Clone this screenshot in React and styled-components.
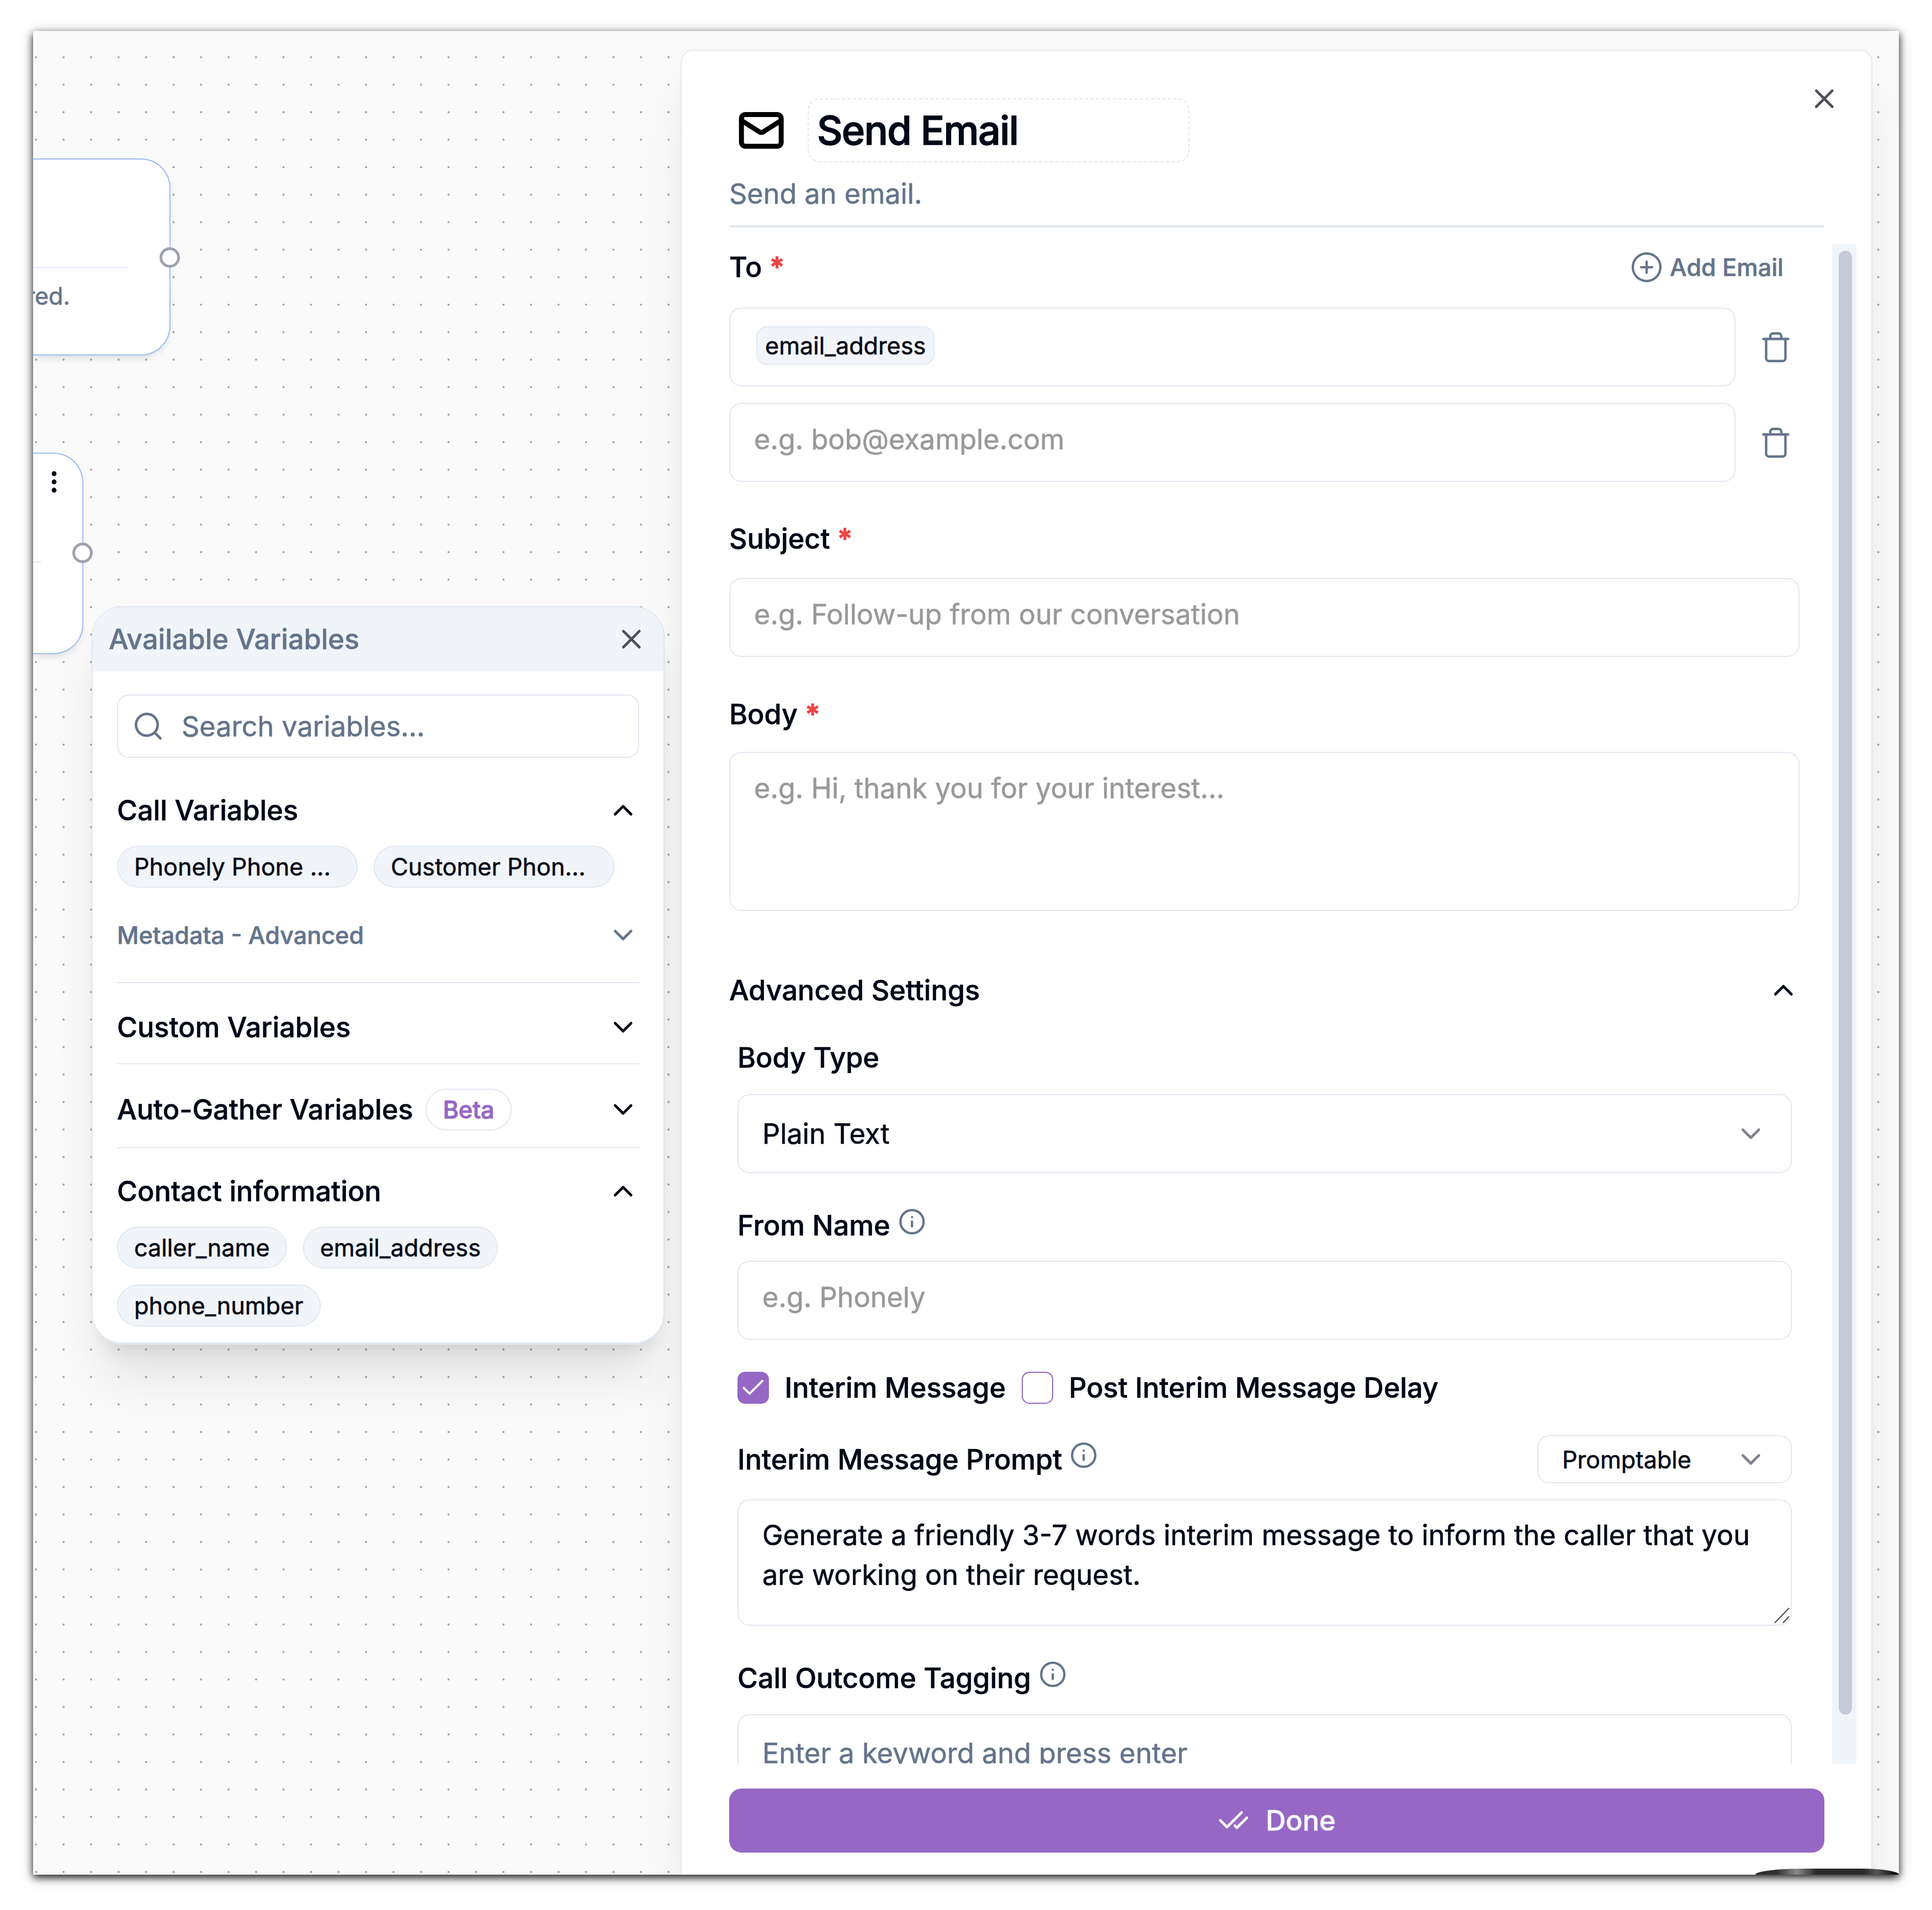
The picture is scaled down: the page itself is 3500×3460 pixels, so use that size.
import styled, { createGlobalStyle, css } from "styled-components"
import { CheckCheck, Check, ChevronDown, ChevronUp, CirclePlus, Info, Mail, Search, Trash, X } from "lucide-react"

const variableChips = ["caller_name", "email_address", "phone_number"]

const FlowCanvas = () => (
    <Dots>
        <pattern id="dots" x="-19.5" y="22.7" width="49.81" height="49.81" patternUnits="userSpaceOnUse">
            <circle cx="24.9" cy="24.9" r="1.8" fill="#91919a" />
        </pattern>
        <rect width="100%" height="100%" fill="url(#dots)" />
    </Dots>
)

const SectionHeader = ({ title, open, muted, badge, top }) => (
    <SectionRow $top={top} $muted={muted}>
        <span>{title}</span>
        {badge && <Badge>{badge}</Badge>}
        {open ? <ChevronUp size={57.6} /> : <ChevronDown size={57.6} />}
    </SectionRow>
)

const VariablesPanel = () => (
    <Panel>
        <PanelHeader>
            Available Variables
            <X size={57.6} color="#4d505b" />
        </PanelHeader>
        <PanelBody>
            <SearchBox>
                <Search size={59} strokeWidth={1.9} />
                Search variables...
            </SearchBox>
            <SectionHeader title="Call Variables" open top={59} />
            <ChipList>
                <Chip $width={436}>Phonely Phone ...</Chip>
                <Chip $width={436}>Customer Phon...</Chip>
            </ChipList>
            <SectionHeader title="Metadata - Advanced" muted top={50} />
            <Rule $top={49} />
            <SectionHeader title="Custom Variables" top={44} />
            <Rule $top={29} />
            <SectionHeader title="Auto-Gather Variables" badge="Beta" top={44} />
            <Rule $top={30} />
            <SectionHeader title="Contact information" open top={42} />
            <ChipList>
                {variableChips.map((name) => <Chip key={name}>{name}</Chip>)}
            </ChipList>
        </PanelBody>
    </Panel>
)

const FieldLabel = ({ children, required, info, top }) => (
    <Label $top={top}>
        {children}
        {required && <Star>*</Star>}
        {info && <Info size={50.4} color="#64748b" />}
    </Label>
)

const EmailDrawer = () => (
    <Drawer>
        <CloseButton><X size={57.6} /></CloseButton>
        <TitleRow>
            <Mail size={86.4} strokeWidth={2.5} color="#000" />
            <TitleInput>Send Email</TitleInput>
        </TitleRow>
        <Description>Send an email.</Description>
        <HeaderRule />
        <ScrollArea>
            <Form>
                <LabelRow>
                    <FieldLabel required>To</FieldLabel>
                    <AddEmail>
                        <CirclePlus size={60} strokeWidth={1.7} />
                        Add Email
                    </AddEmail>
                </LabelRow>
                <EmailRow $top={37}>
                    <Field><InputChip>email_address</InputChip></Field>
                    <Trash size={60} strokeWidth={1.75} />
                </EmailRow>
                <EmailRow $top={30}>
                    <Field>e.g. bob@example.com</Field>
                    <Trash size={60} strokeWidth={1.75} />
                </EmailRow>
                <FieldLabel required top={67}>Subject</FieldLabel>
                <Field $top={35}>e.g. Follow-up from our conversation</Field>
                <FieldLabel required top={68}>Body</FieldLabel>
                <Field $top={32} $height={288}>e.g. Hi, thank you for your interest...</Field>
                <AdvancedHeader>
                    Advanced Settings
                    <ChevronUp size={57.6} />
                </AdvancedHeader>
                <Advanced>
                    <FieldLabel top={50}>Body Type</FieldLabel>
                    <Select $top={30}>
                        Plain Text
                        <ChevronDown size={57.6} />
                    </Select>
                    <FieldLabel info top={59}>From Name</FieldLabel>
                    <Field $top={28}>e.g. Phonely</Field>
                    <CheckRow>
                        <Checkbox $checked><Check size={50.4} strokeWidth={1.9} /></Checkbox>
                        Interim Message
                        <Checkbox />
                        Post Interim Message Delay
                    </CheckRow>
                    <PromptRow>
                        <FieldLabel info>Interim Message Prompt</FieldLabel>
                        <Select $small>
                            Promptable
                            <ChevronDown size={57.6} />
                        </Select>
                    </PromptRow>
                    <Field $top={29} $height={229} $filled>
                        Generate a friendly 3-7 words interim message to inform the caller that you are working on their request.
                        <ResizeHandle viewBox="0 0 28 29">
                            <path d="M1 28 27 1M16 28 27 16" stroke="#555" strokeWidth="2.4" />
                        </ResizeHandle>
                    </Field>
                    <FieldLabel info top={59}>Call Outcome Tagging</FieldLabel>
                    <Select $top={29} $height={141} $muted>Enter a keyword and press enter</Select>
                </Advanced>
            </Form>
            <Track><Thumb /></Track>
        </ScrollArea>
        <DoneButton>
            <CheckCheck size={57.6} />
            Done
        </DoneButton>
    </Drawer>
)

const App = () => (
    <>
        <GlobalStyle />
        <Page>
            <Window>
                <FlowCanvas />
                <Node $top={231} $right={249} $height={357}>
                    <NodeRule $top={195} />
                    <NodeText>required.</NodeText>
                    <Handle $top={159} />
                </Node>
                <Node $top={764} $right={91} $height={365}>
                    <Kebab viewBox="0 0 10 40">
                        <circle cx="5" cy="5" r="4.4" />
                        <circle cx="5" cy="20" r="4.4" />
                        <circle cx="5" cy="35" r="4.4" />
                    </Kebab>
                    <NodeRule $top={195} />
                    <Handle $top={161} />
                </Node>
                <VariablesPanel />
                <EmailDrawer />
                <ChatBubble />
            </Window>
        </Page>
    </>
)

export default App

const GlobalStyle = createGlobalStyle`
    * {
        box-sizing: border-box;
    }

    body {
        margin: 0;
        background: #fff;
        color: #020817;
        font-family: Inter, "Liberation Sans", sans-serif;
        font-size: 50.4px;
        line-height: 72px;
        -webkit-text-stroke: 0.6px currentColor;
    }

    svg {
        flex-shrink: 0;
    }
`

const Page = styled.div`
    width: 3500px;
    height: 3460px;
    padding: 56px 60px 64px;
`

const Window = styled.div`
    position: relative;
    height: 100%;
    background: #fafafa;
    box-shadow: 0 5px 14px rgba(0, 0, 0, 0.9), 0 6px 30px rgba(0, 0, 0, 0.12);
`

const Dots = styled.svg`
    display: block;
    width: 100%;
    height: 100%;
`

const Node = styled.div`
    position: absolute;
    left: 0;
    top: ${(p) => p.$top}px;
    width: ${(p) => p.$right}px;
    height: ${(p) => p.$height}px;
    background: #fff;
    border: 2.5px solid #9dbdf9;
    border-left: none;
    border-radius: 0 54px 54px 0;
    box-shadow: 0 8px 14px -4px rgba(0, 0, 0, 0.12);
    clip-path: inset(-20px -30px -30px 0);
`

const NodeRule = styled.div`
    position: absolute;
    left: 0;
    right: 74px;
    top: ${(p) => p.$top}px;
    height: 2px;
    background: #e5eaf7;
`

const NodeText = styled.div`
    position: absolute;
    right: 180px;
    top: 217px;
    color: #64748b;
    font-size: 43.2px;
    line-height: 60px;
`

const Handle = styled.div`
    position: absolute;
    right: -19px;
    top: ${(p) => p.$top}px;
    width: 37px;
    height: 37px;
    background: #fff;
    border: 5px solid #9ea2ae;
    border-radius: 50%;
`

const Kebab = styled.svg`
    position: absolute;
    left: 33px;
    top: 31px;
    width: 10px;
    height: 40px;
    fill: #020817;
`

const Panel = styled.section`
    position: absolute;
    left: 106px;
    top: 1042px;
    width: 1038px;
    height: 1338px;
    overflow: hidden;
    background: #fff;
    border: 2px solid #e2e8f0;
    border-bottom-width: 4px;
    border-radius: 56px;
    box-shadow: 0 72px 90px -18px rgba(0, 0, 0, 0.1), 0 29px 36px -22px rgba(0, 0, 0, 0.1);
`

const PanelHeader = styled.div`
    display: flex;
    align-items: center;
    justify-content: space-between;
    height: 116px;
    padding: 0 29px;
    background: #f1f5f9;
    color: #64748b;
    font-weight: 500;
`

const PanelBody = styled.div`
    padding: 42px 44px 0;
`

const SearchBox = styled.div`
    display: flex;
    align-items: center;
    gap: 31px;
    height: 115px;
    padding: 0 25px;
    border: 2px solid #e2e8f0;
    border-radius: 22px;
    color: #64748b;
`

const SectionRow = styled.div`
    display: flex;
    align-items: center;
    height: ${(p) => (p.children[1] ? 76 : 72)}px;
    margin-top: ${(p) => p.$top}px;
    font-weight: 500;

    ${(p) => p.$muted && css`
        color: #64748b;
        font-size: 43.2px;
    `}

    svg {
        margin-left: auto;
    }
`

const Badge = styled.span`
    height: 76px;
    margin-left: 23px;
    padding: 0 29px;
    border: 2px solid #e2e8f0;
    border-radius: 38px;
    color: #9667c5;
    font-size: 43.2px;
    font-weight: 500;
    -webkit-text-stroke-width: 1px;
`

const Rule = styled.div`
    height: 2px;
    margin-top: ${(p) => p.$top}px;
    background: #e2e8f0;
`

const ChipList = styled.div`
    display: flex;
    flex-wrap: wrap;
    gap: 29px;
    margin-top: 28px;
`

const Chip = styled.span`
    width: ${(p) => (p.$width ? p.$width + "px" : "auto")};
    height: 76px;
    padding: 0 29px;
    background: #f1f5f9;
    border: 2px solid #e2e8f0;
    border-radius: 38px;
    font-size: 43.2px;
    white-space: nowrap;
`

const Drawer = styled.aside`
    position: absolute;
    left: 1173px;
    top: 34px;
    bottom: 0;
    width: 2159px;
    padding: 86px 85px 0 86px;
    background: #fff;
    border: 2px solid #e2e8f0;
    border-bottom: none;
    border-radius: 22px 22px 0 0;
    box-shadow: 0 72px 90px -18px rgba(0, 0, 0, 0.1), 0 29px 36px -22px rgba(0, 0, 0, 0.1);
    clip-path: inset(-34px -48px 0 -400px);
`

const CloseButton = styled.div`
    position: absolute;
    right: 56px;
    top: 58px;
    height: 58px;
    color: #4d505b;
    line-height: 0;
`

const TitleRow = styled.div`
    display: flex;
    align-items: center;
    gap: 41px;
    padding-left: 14.5px;
`

const TitleInput = styled.div`
    width: 692px;
    height: 116px;
    padding-left: 15px;
    border: 2px dashed #e2e8f0;
    border-radius: 22px;
    font-size: 72px;
    font-weight: 500;
    letter-spacing: -0.022em;
    line-height: 112px;
    -webkit-text-stroke-width: 1.4px;
`

const Description = styled.div`
    margin-top: 21px;
    color: #64748b;
`

const HeaderRule = styled.div`
    height: 4px;
    margin-top: 21px;
    background: #e2e8f0;
`

const ScrollArea = styled.div`
    display: flex;
    justify-content: space-between;
    width: 2042px;
    height: 2753px;
    margin-top: 30px;
    overflow: hidden;
`

const Form = styled.div`
    width: 1939px;
    padding-top: 6px;
`

const Label = styled.div`
    display: flex;
    align-items: center;
    gap: 14px;
    height: 72px;
    margin-top: ${(p) => p.$top || 0}px;
    font-weight: 500;

    svg {
        margin-bottom: 14px;
    }
`

const Star = styled.span`
    color: #ef4444;
    -webkit-text-stroke-width: 1.4px;
`

const LabelRow = styled.div`
    display: flex;
    justify-content: space-between;
`

const AddEmail = styled.div`
    display: flex;
    align-items: center;
    gap: 12px;
    padding-right: 29px;
    color: #64748b;
    font-size: 43.2px;
    font-weight: 500;
`

const EmailRow = styled.div`
    display: grid;
    grid-template-columns: 1823px 60px;
    align-items: center;
    gap: 43px;
    margin-top: ${(p) => p.$top}px;
    color: #64748b;
`

const Field = styled.div`
    position: relative;
    height: ${(p) => p.$height || 143}px;
    margin-top: ${(p) => p.$top || 0}px;
    padding: ${(p) => (p.$filled ? 27 : 28)}px 43px 0;
    border: 2px solid #e2e8f0;
    border-radius: 22px;
    color: ${(p) => (p.$filled ? "#020817" : "#999")};
`

const InputChip = styled.span`
    display: block;
    width: fit-content;
    height: 70px;
    margin: 4px 0 0 4px;
    padding: 0 14px;
    background: #f1f5f9;
    border: 2px solid #e2e8f0;
    border-radius: 20px;
    color: #020817;
    font-size: 43.2px;
    line-height: 67px;
`

const ResizeHandle = styled.svg`
    position: absolute;
    right: 2px;
    bottom: 2px;
    width: 28px;
    height: 29px;
`

const AdvancedHeader = styled.div`
    display: flex;
    align-items: center;
    justify-content: space-between;
    margin-top: 108px;
    font-weight: 500;
`

const Advanced = styled.div`
    padding: 0 14px 0 15px;
`

const Select = styled.div`
    display: flex;
    align-items: center;
    justify-content: space-between;
    width: ${(p) => (p.$small ? "461px" : "auto")};
    height: ${(p) => (p.$small ? 87 : p.$height || 143)}px;
    margin-top: ${(p) => p.$top || 0}px;
    padding: 0 43px;
    border: 2px solid #e2e8f0;
    border-radius: 22px;
    color: ${(p) => (p.$muted ? "#64748b" : "#020817")};
    font-size: ${(p) => (p.$small ? 43.2 : 50.4)}px;

    svg {
        opacity: 0.5;
    }
`

const CheckRow = styled.div`
    display: flex;
    align-items: center;
    gap: 28.5px;
    height: 58px;
    margin-top: 58px;
    font-weight: 500;
`

const Checkbox = styled.span`
    display: flex;
    align-items: center;
    justify-content: center;
    width: 57px;
    height: 58px;
    background: ${(p) => (p.$checked ? "#9667c5" : "#fff")};
    border: 2px solid #9667c5;
    border-radius: 14px;
    color: #fff;
`

const PromptRow = styled.div`
    display: flex;
    align-items: center;
    justify-content: space-between;
    margin-top: 57px;
`

const Track = styled.div`
    width: 44px;
    padding: 12px 8px 0 12px;
    background: #f1f5f9;
`

const Thumb = styled.div`
    width: 24px;
    height: 2652px;
    background: #c5cad9;
    border-radius: 12px;
`

const DoneButton = styled.div`
    display: flex;
    align-items: center;
    justify-content: center;
    gap: 29px;
    height: 116px;
    margin-top: 45px;
    background: #9667c5;
    border-radius: 22px;
    color: #f8fafc;
    font-weight: 500;
`

const ChatBubble = styled.div`
    position: absolute;
    right: 0;
    bottom: 0;
    width: 260px;
    height: 11px;
    background: linear-gradient(90deg, #2b2b2b 0, #333 40px, #8a8a8a 75px, #2a2a2a 110px, #2a2a2a 195px, #555 220px, #222 245px, #000);
    border-radius: 90px 70px 0 0 / 11px 11px 0 0;
`
